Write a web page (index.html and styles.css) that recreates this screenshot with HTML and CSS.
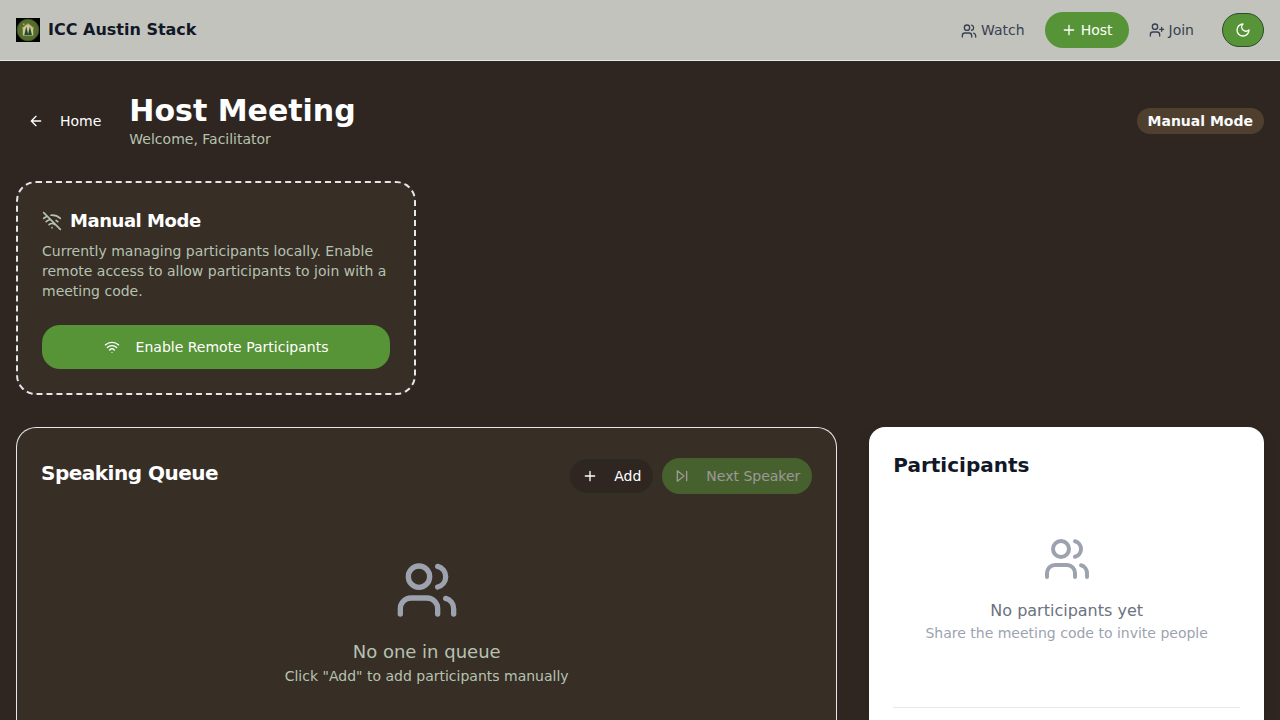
FILE: index.html
```html
<!DOCTYPE html>
<html lang="en">
<head>
<meta charset="utf-8">
<title>ICC Austin Stack</title>
<link rel="stylesheet" href="styles.css">
</head>
<body>
<svg class="sprite" aria-hidden="true">
  <symbol id="users" viewBox="0 0 24 24"><path d="M16 21v-2a4 4 0 0 0-4-4H6a4 4 0 0 0-4 4v2"/><circle cx="9" cy="7" r="4"/><path d="M22 21v-2a4 4 0 0 0-3-3.87M16 3.13a4 4 0 0 1 0 7.75"/></symbol>
  <symbol id="plus" viewBox="0 0 24 24"><path d="M5 12h14M12 5v14"/></symbol>
  <symbol id="user-plus" viewBox="0 0 24 24"><path d="M16 21v-2a4 4 0 0 0-4-4H6a4 4 0 0 0-4 4v2"/><circle cx="9" cy="7" r="4"/><path d="M19 8v6M22 11h-6"/></symbol>
  <symbol id="moon" viewBox="0 0 24 24"><path d="M12 3a6 6 0 0 0 9 9 9 9 0 1 1-9-9Z"/></symbol>
  <symbol id="arrow-left" viewBox="0 0 24 24"><path d="m12 19-7-7 7-7M19 12H5"/></symbol>
  <symbol id="wifi" viewBox="0 0 24 24"><path d="M12 20h.01M2 8.82a15 15 0 0 1 20 0M5 12.859a10 10 0 0 1 14 0M8.5 16.429a5 5 0 0 1 7 0"/></symbol>
  <symbol id="wifi-off" viewBox="0 0 24 24"><path d="M12 20h.01M8.5 16.429a5 5 0 0 1 7 0M5 12.859a10 10 0 0 1 5.17-2.69M19 12.859a10 10 0 0 0-2.007-1.523M2 8.82a15 15 0 0 1 4.177-2.643M22 8.82a15 15 0 0 0-11.288-3.764M2 2l20 20"/></symbol>
  <symbol id="skip" viewBox="0 0 24 24"><path d="M5 4 15 12 5 20zM19 5v14"/></symbol>
</svg>
<header class="topbar">
  <a class="brand">
    <svg class="logo" viewBox="0 0 24 24">
      <rect width="24" height="24" fill="#020402"/>
      <circle cx="12" cy="12" r="10.800" fill="#566c2c" stroke="#3f5426"/>
      <path d="M6.800 17.500v-7.500L12 6l5.200 4v7.500z" fill="#cfc597"/>
      <path d="M6 10.300 12 5.700l6 4.600" fill="none" stroke="#b8af76"/>
      <path d="m10.300 8.500 2 8.500h-4zM13.900 8.500l2 8.500h-4z" fill="#1f4a2c"/>
      <path d="M7 5.500h1.500v1.500H7z" fill="#b8af76"/>
    </svg>
    <span>ICC Austin Stack</span>
  </a>
  <nav class="nav">
    <a class="nav-link"><svg class="icon nav-users"><use href="#users"/></svg>Watch</a>
    <a class="nav-link active"><svg class="icon"><use href="#plus"/></svg>Host</a>
    <a class="nav-link"><svg class="icon"><use href="#user-plus"/></svg>Join</a>
    <button class="theme-toggle" aria-label="Theme"><svg class="icon"><use href="#moon"/></svg></button>
  </nav>
</header>
<main class="page">
  <div class="page-head">
    <button class="btn ghost"><svg class="icon"><use href="#arrow-left"/></svg>Home</button>
    <div class="heading">
      <h1>Host Meeting</h1>
      <p>Welcome, Facilitator</p>
    </div>
    <span class="badge">Manual Mode</span>
  </div>
  <div class="mode-grid">
    <section class="mode-card">
      <h2><svg class="icon icon-md"><use href="#wifi-off"/></svg>Manual Mode</h2>
      <p>Currently managing participants locally. Enable remote access to allow participants to join with a meeting code.</p>
      <button class="btn primary wide"><svg class="icon"><use href="#wifi"/></svg>Enable Remote Participants</button>
    </section>
  </div>
  <div class="content-grid">
    <section class="queue">
      <div class="queue-head">
        <h2>Speaking Queue</h2>
        <div class="actions">
          <button class="btn outline"><svg class="icon"><use href="#plus"/></svg>Add</button>
          <button class="btn primary disabled"><svg class="icon"><use href="#skip"/></svg>Next Speaker</button>
        </div>
      </div>
      <div class="empty">
        <svg class="icon icon-xl"><use href="#users"/></svg>
        <p class="lead">No one in queue</p>
        <p>Click "Add" to add participants manually</p>
      </div>
    </section>
    <section class="people">
      <h2>Participants</h2>
      <div class="empty">
        <svg class="icon icon-lg"><use href="#users"/></svg>
        <p class="lead">No participants yet</p>
        <p>Share the meeting code to invite people</p>
      </div>
      <div class="people-foot"></div>
    </section>
  </div>
</main>
</body>
</html>
```
FILE: styles.css
```css
* { box-sizing: border-box; margin: 0; padding: 0; }
body {
  display: flex; flex-direction: column;
  height: 720px; overflow: hidden;
  background: #2f2621;
  color: #fff;
  font: 14px/20px "DejaVu Sans", sans-serif;
}
button { font: inherit; color: inherit; border: 0; background: none; }
.sprite { display: none; }
.icon {
  width: 16px; height: 16px; flex: none;
  fill: none; stroke: currentColor; stroke-width: 2;
  stroke-linecap: round; stroke-linejoin: round;
}
.icon-md { width: 20px; height: 20px; color: #b6c2b0; }
.icon-lg { width: 48px; height: 48px; color: #9ca3af; }
.icon-xl { width: 64px; height: 64px; color: #9ca3af; }

.topbar {
  display: flex; align-items: center; justify-content: space-between;
  flex: none; height: 61px; padding: 0 16px;
  background: #c2c3bc; border-bottom: 1px solid #e5e7eb;
}
.brand { display: flex; align-items: center; gap: 8px; color: #111827; font-size: 16px; font-weight: 700; line-height: 24px; }
.logo { width: 24px; height: 24px; }
.nav { display: flex; align-items: center; gap: 4px; }
.nav-link { display: flex; align-items: center; gap: 4px; height: 36px; padding: 0 16px; border-radius: 18px; color: #374151; }
.nav-link.active { background: #579437; color: #fff; }
.nav-users { margin-top: 2px; }
.theme-toggle {
  display: grid; place-items: center;
  width: 42px; height: 34px; margin-left: 8px;
  border: 1px solid #2f4a32; border-radius: 17px; background: #579437;
}

.page { display: flex; flex-direction: column; flex: 1; min-height: 0; padding: 32px 16px 0; }
.page-head { display: flex; align-items: center; gap: 16px; margin-bottom: 32px; }
.btn { display: inline-flex; align-items: center; justify-content: center; gap: 16px; height: 36px; padding: 0 12px; border-radius: 18px; white-space: nowrap; }
h1 { font-size: 30px; line-height: 36px; }
.heading { flex: 1; }
.heading p { color: #b6c2b0; }
.badge { padding: 3px 11px; border-radius: 13px; background: #4f3f2f; font-weight: 700; color: #f9fafb; }

.mode-grid { display: grid; grid-template-columns: repeat(3, 1fr); gap: 24px; margin-bottom: 32px; }
.mode-card { padding: 24px; border: 2px dashed #e5e7eb; border-radius: 20px; background: #372e26; }
.mode-card h2 { display: flex; align-items: center; gap: 8px; margin-bottom: 6px; font-size: 18px; line-height: 28px; letter-spacing: -0.45px; }
.mode-card p { margin-bottom: 24px; color: #b6c2b0; }
.primary { background: #579437; }
.wide { width: 100%; height: 44px; }

.content-grid { display: grid; grid-template-columns: repeat(3, 1fr); gap: 32px; flex: 1; min-height: 0; }
.queue { grid-column: span 2; padding: 24px; border: 1px solid #e5e7eb; border-bottom: 0; border-radius: 20px 20px 0 0; background: #372e26; }
.queue-head { display: flex; justify-content: space-between; padding-top: 6px; }
.queue h2, .people h2 { font-size: 20px; line-height: 28px; }
.queue h2 { padding-top: 1px; letter-spacing: -0.5px; }
.actions { display: flex; align-items: center; gap: 8px; }
.outline { border: 1px solid #2b3525; background: #2f2621; background-clip: padding-box; }
.disabled { opacity: .5; }
.empty { display: flex; flex-direction: column; align-items: center; }
.empty .icon { margin-bottom: 16px; }
.queue .empty { padding-top: 64px; color: #b6c2b0; }
.queue .lead { font-size: 18px; line-height: 28px; }
.people { padding: 24px 24px 0; border-radius: 16px 16px 0 0; background: #fff; box-shadow: 0 4px 12px rgba(0, 0, 0, .12); }
.people h2 { color: #111827; }
.people .empty { padding: 56px 0 64px; color: #9ca3af; }
.people .lead { color: #6b7280; font-size: 16px; line-height: 24px; }
.people-foot { border-top: 1px solid #e5e7eb; }
```
